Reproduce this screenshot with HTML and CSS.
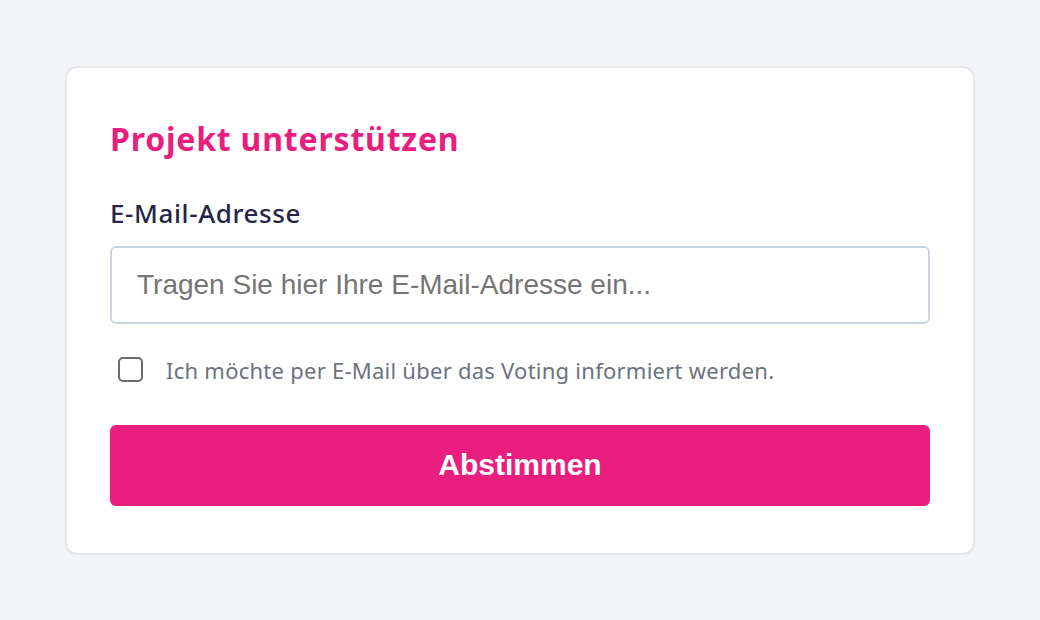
FILE: index.html
```html
<!DOCTYPE html>
<html lang="de">
<head>
<meta charset="UTF-8">
<meta name="viewport" content="width=device-width, initial-scale=1.0">
<title>Projekt unterstützen</title>
<link rel="stylesheet" href="styles.css">
</head>
<body>
<div class="page">
    <form class="card" onsubmit="return false;">
        <h1 class="card-title">Projekt unterstützen</h1>
        <label for="email" class="field-label">E-Mail-Adresse</label>
        <input type="email" id="email" class="field-input" placeholder="Tragen Sie hier Ihre E-Mail-Adresse ein...">
        <label class="check-row">
            <input type="checkbox" class="check-box">
            <span class="check-text">Ich möchte per E-Mail über das Voting informiert werden.</span>
        </label>
        <button type="submit" class="vote-btn">Abstimmen</button>
    </form>
</div>
</body>
</html>
```

FILE: styles.css
```css
body {
    margin: 0;
    padding: 0;
    background-color: #f3f4f6;
    font-family: "Noto Sans", "Open Sans", sans-serif;
}
.page {
    min-height: 100vh;
    display: flex;
    align-items: center;
    justify-content: center;
}
.card {
    width: 910px;
    box-sizing: border-box;
    background-color: #fff;
    border: 2px solid #e5e7eb;
    border-radius: 12px;
    padding: 43px 43px 47px;
    display: flex;
    flex-direction: column;
}
.card-title {
    margin: 0 0 31px;
    color: #e91e7f;
    font-size: 32px;
    font-weight: 700;
    line-height: 55px;
    letter-spacing: 0.8px;
}
.field-label {
    color: #25254a;
    font-size: 26px;
    font-weight: 500;
    line-height: 32px;
    letter-spacing: 0.6px;
    margin-bottom: 17px;
}
.field-input {
    height: 78px;
    box-sizing: border-box;
    border: 2px solid #cbd5e1;
    border-radius: 6px;
    padding: 0 25px;
    font-family: "Liberation Sans", Arial, sans-serif;
    font-size: 28px;
    color: #333;
    outline: none;
}
.field-input::placeholder {
    color: #757575;
}
.check-row {
    display: flex;
    align-items: center;
    gap: 23px;
    margin: 31px 0 40px 8px;
    cursor: pointer;
}
.check-box {
    appearance: none;
    width: 25px;
    height: 25px;
    margin: 0;
    border: 2px solid #6b6b6b;
    border-radius: 5px;
    background: #fff;
}
.check-text {
    color: #6b7280;
    font-size: 22px;
    line-height: 30px;
    letter-spacing: 0.25px;
}
.vote-btn {
    height: 81px;
    border: none;
    border-radius: 6px;
    background-color: #e91e7f;
    color: #fff;
    font-family: "Liberation Sans", Arial, sans-serif;
    font-size: 30px;
    font-weight: 700;
    cursor: pointer;
}
```
